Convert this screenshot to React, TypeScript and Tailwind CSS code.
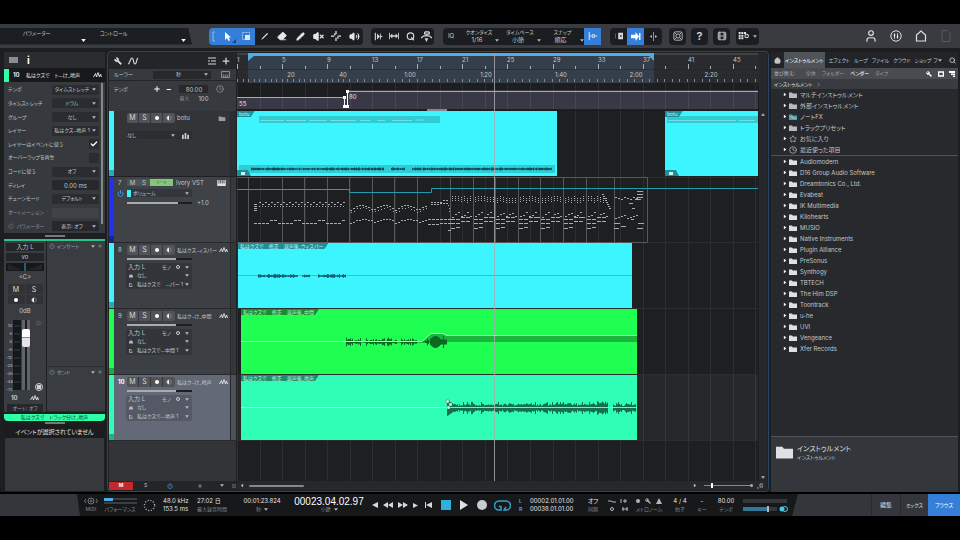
import React from "react";
import clsx from "clsx";
import {
  Check,
  Clock,
  Eraser,
  Film,
  House,
  ListMinus,
  Pencil,
  Plus,
  Power,
  Search,
  Star,
  User,
  Volume2,
  VolumeX,
  Wrench
} from "lucide-react";

interface Track {
  num: string;
  name: string;
  bar: string;
  selected?: boolean;
  output: string;
}

const audioTracks: Track[] = [
  { num: "8", name: "私はクズ..ィスパー", bar: "bg-[#3df5ff]", output: "私はクズで　...パー 1" },
  { num: "9", name: "私はク..け_中間", bar: "bg-[#1fff52]", output: "私はクズで...中間 1" },
  { num: "10", name: "私はク..け_地声", bar: "bg-[#2fffb6]", output: "私はクズで...地声 1", selected: true }
];

const inspectorRows = [
  { label: "テンポ", value: "タイムストレッチ" },
  { label: "タイムストレッチ", value: "ドラム" },
  { label: "グループ", value: "なし" },
  { label: "レイヤー", value: "私はクズ..地声 1" },
  { label: "レイヤーはイベントに従う", check: true },
  { label: "オーバーラップを再生", check: false },
  { label: "コードに従う", value: "オフ" },
  { label: "ディレイ", text: "0.00 ms" },
  { label: "チューンモード", value: "デフォルト" },
  { label: "オートメーション", text: "" }
];

const categories = ["マルチインストゥルメント", "外部インストゥルメント", "ノートFX", "トラックプリセット", "お気に入り", "最近使った項目"];

const vendors = [
  "Audiomodern", "D16 Group Audio Software", "Dreamtonics Co., Ltd.", "Evabeat", "IK Multimedia", "Kilohearts",
  "MUSIO", "Native Instruments", "Plugin Alliance", "PreSonus", "Synthogy", "TBTECH", "The Him DSP", "Toontrack",
  "u-he", "UVI", "Vengeance", "Xfer Records"
];

// deterministic noise so that the clips look the same on every render
function noise(n: number) {
  const v = Math.sin(n * 12.9898) * 43758.5453;
  return v - Math.floor(v);
}

function wavePath(x0: number, x1: number, mid: number, amp: (x: number) => number) {
  let d = "";
  for (let x = x0; x <= x1; x++) {
    const h = amp(x);
    if (h > 0) d += `M${x + 0.5} ${mid - h}V${mid + h}`;
  }
  return d;
}

function Down({ className }: { className?: string }) {
  return (
    <svg viewBox="0 0 6 4" className={clsx("h-[3px] w-[4px] shrink-0 fill-[#b4b6ba]", className)} aria-hidden="true">
      <path d="M0 0h6L3 4z" />
    </svg>
  );
}

function WaveIcon() {
  return (
    <svg viewBox="0 0 18 12" className="h-[6px] w-[9px] shrink-0 fill-none stroke-[#e4e5e8]" strokeWidth="1.8" aria-hidden="true">
      <path d="M1 10 5 3l2 7 3-9 3 9 2-6 2 6" />
    </svg>
  );
}

function FolderIcon({ className }: { className?: string }) {
  return (
    <svg viewBox="0 0 16 12" className={clsx("shrink-0", className)} aria-hidden="true">
      <path d="M0 1h6l1.500 2H16v9H0z" fill="currentColor" />
    </svg>
  );
}

interface DropProps {
  label: string;
  value: string;
  className?: string;
  center?: boolean;
}

function Drop({ label, value, className, center }: DropProps) {
  return (
    <span className={clsx("flex min-w-0 items-center pr-[3px]", className)}>
      <select
        aria-label={label}
        className={clsx("min-w-0 flex-1 appearance-none bg-transparent outline-none", center && "text-center")}
      >
        <option>{value}</option>
      </select>
      <Down />
    </span>
  );
}

function ToolButton({ label, active, className, children }: { label: string; active?: boolean; className?: string; children: React.ReactNode }) {
  return (
    <button
      type="button"
      aria-label={label}
      className={clsx("flex h-[17px] items-center justify-center", active ? "bg-[#367fd8]" : "bg-[#1c1d20]", className)}
    >
      {children}
    </button>
  );
}

function ToolSelect({ id, label, value, className }: { id: string; label: string; value: string; className: string }) {
  return (
    <div className={clsx("flex flex-col justify-center", className)}>
      <label htmlFor={id} className="leading-[8px]">{label}</label>
      <span className="flex h-[8px] items-center">
        <select id={id} className="min-w-0 flex-1 appearance-none bg-transparent text-center text-[6px] leading-[8px]">
          <option>{value}</option>
        </select>
        <Down />
      </span>
    </div>
  );
}

function TopBar() {
  return (
    <header className="flex h-6 shrink-0 items-center bg-[#393b40]">
      <div className="flex h-[17px] w-[192px] shrink-0 bg-[#1b1e23] [clip-path:polygon(0_0,98%_0,100%_100%,0_100%)]">
        <button type="button" className="flex w-[100px] items-center justify-between pr-[14px] pl-[23px]">
          <span className="pb-[5px]">パラメーター</span>
          <Down className="mt-2 w-[5px] fill-white" />
        </button>
        <button type="button" className="flex flex-1 items-center justify-between pr-[6px]">
          <span className="pb-[5px]">コントロール</span>
          <Down className="mt-2 w-[5px] fill-white" />
        </button>
      </div>

      <div className="ml-[17px] flex shrink-0 overflow-hidden rounded-sm text-[#e6e7ea]">
        <ToolButton label="矢印" active className="w-[28px]">
          <svg viewBox="0 0 28 17" className="h-[17px] w-[28px]">
            <path d="M6 4H4v9h2" fill="none" stroke="#8fbcf0" />
            <path d="M16 4v8l2-2 1.500 3 1.500-.8-1.500-2.700h2.500z" fill="#fff" />
            <path d="M27 11v4h-4z" fill="#16427c" />
          </svg>
        </ToolButton>
        <ToolButton label="範囲" active className="w-[18px]">
          <svg viewBox="0 0 18 17" className="h-[17px] w-[18px]" fill="none">
            <path d="M5.500 4.500h7v7h-7z" stroke="#9cc6f5" strokeDasharray="2 1" />
            <path d="M8 7h5v5H8z" fill="#dcebfb" />
          </svg>
        </ToolButton>
        <ToolButton label="分割" className="w-[18px]">
          <svg viewBox="0 0 10 10" className="size-[9px]"><path d="M1 9 3 6l5-5 1 1-5 5z" fill="currentColor" /></svg>
        </ToolButton>
        <ToolButton label="消しゴム" className="w-[18px]"><Eraser className="size-[10px] fill-current" /></ToolButton>
        <ToolButton label="ペイント" className="w-[18px]"><Pencil className="size-[9px] fill-current" /></ToolButton>
        <ToolButton label="ミュート" className="w-[18px]"><VolumeX className="size-[11px] fill-current stroke-3" /></ToolButton>
        <ToolButton label="ベンド" className="w-[18px]">
          <svg viewBox="0 0 12 12" className="size-[10px]" fill="none" stroke="currentColor" strokeWidth="1.500">
            <path d="M6 0v4M6 8v4M0 6h4M8 6h4M4 3l1 2M9 9 7.500 7.500" />
          </svg>
        </ToolButton>
        <ToolButton label="試聴" className="w-[18px]"><Volume2 className="size-[11px] fill-current" /></ToolButton>
      </div>

      <div className="ml-2 flex shrink-0 overflow-hidden rounded-sm text-[#d6d7da]">
        <ToolButton label="ナッジ" className="w-[15px]">
          <svg viewBox="0 0 12 12" className="size-[9px]" fill="currentColor"><path d="M1 1h1.500v10H1zM4 2l4 4-4 4zM8 2h1v3l3 1-3 1v3H8z" /></svg>
        </ToolButton>
        <ToolButton label="リップル" className="w-[16px]">
          <svg viewBox="0 0 12 12" className="size-[10px]" fill="currentColor"><path d="M0 2h1v8H0zM11 2h1v8h-1zM1 6l3-3v2h4V3l3 3-3 3V7H4v2z" /></svg>
        </ToolButton>
        <ToolButton label="クオンタイズ適用" className="w-[16px]">
          <svg viewBox="0 0 12 12" className="size-[9px]" fill="none" stroke="currentColor" strokeWidth="1.600"><circle cx="6" cy="5.500" r="4.300" /><path d="m7 7 3.500 4" /></svg>
        </ToolButton>
        <ToolButton label="自動スクロール" className="w-[16px]">
          <svg viewBox="0 0 12 12" className="size-[11px]" fill="none" stroke="currentColor" strokeWidth="1.400"><path d="M0 8c2-4 10-4 12 0M4 1h5M4 3.500h5M4 1v2.500M9 1v2.500" /><path d="M4 8h4l-2 4z" fill="currentColor" stroke="none" /></svg>
        </ToolButton>
      </div>

      <div className="ml-[9px] flex h-[17px] shrink-0 rounded-sm bg-[#1c1d20] text-center text-[#c9cbcf]">
        <button type="button" className="w-[16px] text-[6px]">IQ</button>
        <ToolSelect id="quantize" label="クオンタイズ" value="1/16" className="w-[40px]" />
        <ToolSelect id="timebase" label="タイムベース" value="小節" className="w-[42px]" />
        <ToolSelect id="snap" label="スナップ" value="順応" className="w-[43px]" />
        <ToolButton label="スナップ切替" active className="w-[17px]">
          <svg viewBox="0 0 12 12" className="size-[10px]" fill="none" stroke="#d8e8fb"><path d="M1.500 1v10M2 6h2M9 6h2M5 4.500h3v3H5z" strokeWidth="1.200" /></svg>
        </ToolButton>
      </div>

      <div className="ml-[9px] flex shrink-0 overflow-hidden rounded-sm">
        <ToolButton label="カーソル追従" className="w-[17px]">
          <svg viewBox="0 0 12 10" className="h-[8px] w-[10px]"><path d="M5 1h6v8H5z" fill="#d6d7da" /><path d="m9 3-2 2 2 2z" fill="#1c1d20" /><path d="M1 2h1v6H1z" fill="#66686c" /></svg>
        </ToolButton>
        <ToolButton label="スクロール" active className="w-[17px]">
          <svg viewBox="0 0 12 10" className="h-[9px] w-[11px]" fill="#fff"><path d="M1 3h5V0l4 5-4 5V7H1zM10 1h1.500v8H10z" /></svg>
        </ToolButton>
        <ToolButton label="カーソル編集" className="w-[18px]">
          <svg viewBox="0 0 12 12" className="size-[9px]" fill="#b4b6ba"><path d="M5.500 0h1v12h-1zM1 6l3-2v4zM11 6 8 4v4z" /></svg>
        </ToolButton>
      </div>
      <ToolButton label="マクロ" className="ml-[7px] w-[17px] rounded-sm">
        <svg viewBox="0 0 12 12" className="size-[10px]" fill="none" stroke="#d0d1d4"><rect x="1" y="1" width="10" height="10" rx="2" /><circle cx="6" cy="6" r="2.500" /><path d="m2 2 2 2M10 2 8 4M2 10l2-2M10 10 8 8" /></svg>
      </ToolButton>
      <ToolButton label="ヘルプ" className="ml-[5px] w-[17px] rounded-sm text-[11px] font-semibold text-[#d6d7da]">?</ToolButton>
      <ToolButton label="ビデオ" className="ml-[5px] w-[17px] rounded-sm"><Film className="size-[10px] text-[#c9cbcf]" /></ToolButton>
      <ToolButton label="表示設定" className="ml-[6px] w-[23px] gap-[3px] rounded-sm">
        <svg viewBox="0 0 16 12" className="h-[8px] w-[12px]" fill="#e1e2e5"><path d="M0 0h3v3H0zM4 0h3v3H4zM8 0h3v3H8zM0 4h3v3H0zM4 4h3v3H4zM0 8h3v3H0zM4 8h3v3H4z" /><circle cx="12" cy="6" r="2.600" fill="none" stroke="#e1e2e5" strokeWidth="1.600" /></svg>
        <Down />
      </ToolButton>

      <nav className="ml-auto flex shrink-0 items-center pr-[2px] text-[#dfe0e3]">
        <button type="button" aria-label="ユーザー" className="flex w-[25px] justify-center"><User className="size-[14px]" /></button>
        <button type="button" aria-label="オーディオ" className="flex w-[25px] justify-center">
          <svg viewBox="0 0 12 12" className="size-[12px]" fill="none" stroke="currentColor"><circle cx="6" cy="6" r="5.200" /><path d="M4.500 3.500v5M7.500 3.500v5M3.500 5h2M6.500 7h2" /></svg>
        </button>
        <button type="button" aria-label="スタート" className="flex w-[25px] justify-center">
          <svg viewBox="0 0 12 12" className="size-[12px]" fill="none" stroke="currentColor" strokeWidth="1.200"><path d="M1.500 11V5L6 1l4.500 4v6z" /></svg>
        </button>
        <button type="button" aria-label="ソング" className="flex w-[25px] justify-center text-[#55585e]">
          <svg viewBox="0 0 12 12" className="size-[12px]" fill="none" stroke="currentColor"><path d="M2 .5h5L10 3.500v8H2z" /></svg>
        </button>
      </nav>
    </header>
  );
}

function Inspector() {
  return (
    <aside className="flex w-[101px] shrink-0 flex-col bg-[#1c1e20]">
      <div className="flex h-4 items-center gap-[9px] bg-[#2a2c2f] px-[5px]">
        <svg viewBox="0 0 9 6" className="h-[6px] w-[9px] fill-[#8b8d92]"><path d="M0 0h9v6H0z" /></svg>
        <span className="text-[10px] leading-none font-bold text-white">i</span>
      </div>
      <div className="flex h-[14px] items-center bg-[#17191b] pr-[3px] text-[6px] text-[#e4e5e8]">
        <span className="h-[13px] w-[5px] bg-[#2fffa6]" />
        <span className="w-[17px] pl-1 font-bold">10</span>
        <span className="flex-1 whitespace-pre text-[5px]">私はクズで　ト...け_地声</span>
        <WaveIcon />
      </div>
      <div className="flex bg-[#36393d] pt-px">
        <div className="grid h-[150px] flex-1 auto-rows-fr">
          {inspectorRows.map((row) => (
            <label key={row.label} className="flex items-center justify-between pr-[2px] pl-[4px]">
              <span className={row.label === "オートメーション" ? "text-[#8d9095]" : ""}>{row.label}</span>
              {row.value && <Drop label={row.label} value={row.value} center className="h-[10px] w-[47px] shrink-0 rounded-xs bg-[#2a2c2f]" />}
              {row.text !== undefined && (
                <input
                  aria-label={row.label}
                  defaultValue={row.text}
                  className={clsx("h-[10px] w-[47px] shrink-0 rounded-xs text-center text-[6px]", row.text ? "bg-[#26282b]" : "bg-[#3f4246]")}
                />
              )}
              {row.check !== undefined && (
                <span className="relative flex size-[10px] shrink-0 items-center justify-center bg-[#2a2c2f]">
                  <input type="checkbox" defaultChecked={row.check} className="peer absolute inset-0 appearance-none" />
                  <Check className="hidden size-[8px] stroke-4 text-white peer-checked:block" />
                </span>
              )}
            </label>
          ))}
          <div className="flex items-center gap-[3px] pr-[2px] pl-[4px]">
            <Power className="size-[6px] shrink-0 text-[#85888d]" />
            <span className="flex-1 whitespace-nowrap text-[#8d9095]">パラメーター</span>
            <Drop label="パラメーター" value="表示: オフ" center className="h-[10px] w-[47px] shrink-0 rounded-xs bg-[#26282b]" />
          </div>
        </div>
        <span className="mr-[2px] h-[141px] w-[2px] bg-[#85888d]" />
      </div>
      <div className="flex h-[6px] items-center justify-center"><span className="h-[2px] w-5 bg-[#77797e]" /></div>
      <div className="h-[2px] bg-[#2bc389]" />

      <div className="flex h-[171px] bg-[#393c40]">
        <div className="flex w-[43px] flex-col items-center border-r border-[#1c1e20] pt-[2px]">
          <button type="button" className="h-[8px] w-[38px] bg-[#232528] text-[6px] leading-[8px]">入力 L</button>
          <button type="button" className="mt-[2px] h-[8px] w-[38px] bg-[#232528] text-[6px] leading-[8px]">vo</button>
          <svg viewBox="0 0 38 8" className="mt-[2px] h-[8px] w-[38px] bg-[#151719]" fill="none"><path d="M2 1 17 7H2zM36 1 21 7h15z" fill="#222427" /><path d="M19 0v8" stroke="#3fa5c4" /></svg>
          <span className="mt-[2px] text-[6px] leading-[8px]">&lt;C&gt;</span>
          <div className="mt-[3px] grid h-[20px] w-[35px] grid-cols-2 gap-px text-[7px] text-[#dadbde]">
            <button type="button" className="bg-[#303236]">M</button>
            <button type="button" className="bg-[#303236]">S</button>
            <button type="button" aria-label="録音" className="flex items-center justify-center bg-[#303236]"><span className="size-1 rounded-full bg-white" /></button>
            <button type="button" aria-label="モニター" className="flex items-center justify-center bg-[#303236]"><HalfDot /></button>
          </div>
          <span className="mt-[3px] text-[6px] leading-[8px]">0dB</span>
          <div className="flex h-[77px] w-full pt-[5px] pl-[2px]">
            <div className="flex w-[6px] flex-col justify-between text-right text-[4px] leading-[5px]">
              {["", "10", "6", "0", "-6", "-12", "-24", "-36", "-48", "-72"].map((db) => <span key={db}>{db}</span>)}
            </div>
            <svg viewBox="0 0 8 70" className="ml-px h-[70px] w-[8px] bg-[#15181b]" stroke="#28435a"><path d="M1 6h6M1 14h6M1 22h6M1 30h6M1 38h6M1 46h6M1 54h6M1 62h6" /></svg>
            <div className="flex w-[10px] justify-center">
              <input
                type="range"
                aria-label="チャンネル音量"
                defaultValue={82}
                className="h-[70px] w-[8px] appearance-none bg-[linear-gradient(90deg,#606367_0_3px,#1c1e20_3px_5px,#606367_5px)] [direction:rtl] [writing-mode:vertical-lr] [&::-webkit-slider-thumb]:h-[18px] [&::-webkit-slider-thumb]:w-[8px] [&::-webkit-slider-thumb]:appearance-none [&::-webkit-slider-thumb]:rounded-xs [&::-webkit-slider-thumb]:bg-[linear-gradient(#fff_0_8px,#8b8d92_8px_9px,#e4e5e8_9px)]"
              />
            </div>
            <div className="flex flex-1 flex-col items-center justify-between pb-[1px]">
              <ListMinus className="size-[6px] text-[#74777c]" />
              <span className="flex size-[8px] items-center justify-center rounded-full border border-[#d0d1d4]"><span className="size-[4px] bg-[#d0d1d4]" /></span>
            </div>
          </div>
          <div className="flex h-[12px] w-[36px] items-center justify-between px-1 text-[6px] font-bold"><span>10</span><WaveIcon /></div>
          <button type="button" className="h-[8px] w-[36px] bg-[#26282b] text-[5px] leading-[8px] text-[#9a9ca1]">オート: オフ</button>
        </div>
        <div className="flex flex-1 flex-col text-[#a2a5aa]">
          {["インサート", "センド"].map((name) => (
            <div key={name} className="flex h-[126px] items-start gap-[2px] border-b border-[#2b2d31] p-[2px] leading-[7px] last:h-auto last:flex-1">
              <Power className="size-[6px]" />
              <span className="flex-1">{name}</span>
              <Down className="mt-[2px]" />
              <Plus className="size-[6px]" />
            </div>
          ))}
        </div>
      </div>
      <div className="mt-[2px] h-[7px] rounded-b-sm bg-[#2fffa6] text-center text-[5px] leading-[7px] whitespace-pre text-[#0c4f35]">私はクズで　トラック分け_地声</div>
      <div className="flex h-[4px] items-center justify-center"><span className="h-[2px] w-5 bg-[#77797e]" /></div>
      <div className="h-[13px] bg-[#1a1c1e] text-center text-[6px] leading-[13px] text-[#e4e5e8]">イベントが選択されていません</div>
      <div className="mx-px mb-px flex-1 bg-[#36383c]" />
    </aside>
  );
}

function HalfDot() {
  return (
    <svg viewBox="0 0 8 8" className="size-[6px]" aria-hidden="true">
      <path d="M4 1a3 3 0 0 0 0 6z" fill="#fff" />
      <circle cx="4" cy="4" r="3" fill="none" stroke="#8b8d92" />
    </svg>
  );
}

function TrackButtons() {
  return (
    <div className="grid h-[10px] w-12 shrink-0 grid-cols-4 overflow-hidden rounded-xs text-[7px] leading-[10px] text-[#d6d7da]">
      <button type="button" className="border-r border-[#33363a] bg-[#505358]">M</button>
      <button type="button" className="border-r border-[#33363a] bg-[#505358]">S</button>
      <button type="button" aria-label="録音" className="flex items-center justify-center border-r border-[#33363a] bg-[#505358]"><span className="size-1 rounded-full bg-white" /></button>
      <button type="button" aria-label="モニター" className="flex items-center justify-center bg-[#505358]"><HalfDot /></button>
    </div>
  );
}

function VolumeSlider({ label, value }: { label: string; value: number }) {
  return (
    <input
      type="range"
      aria-label={label}
      defaultValue={value}
      className="block h-[2px] w-[65px] appearance-none [&::-webkit-slider-thumb]:h-[2px] [&::-webkit-slider-thumb]:w-px [&::-webkit-slider-thumb]:appearance-none"
      style={{ background: `linear-gradient(90deg, #a9abaf ${value}%, #1c1e20 ${value}%)` }}
    />
  );
}

function ColorBar({ className }: { className: string }) {
  return (
    <span className={clsx("flex w-[5px] shrink-0 items-end", className)}>
      <span className="h-[6px] w-full bg-black/30" />
    </span>
  );
}

function TrackHeader({ track }: { track: Track }) {
  return (
    <li className={clsx("flex h-[66px] border-b border-[#27292c]", track.selected ? "bg-[#636976]" : "bg-[#3c3f43]")}>
      <ColorBar className={track.bar} />
      <div className="min-w-0 flex-1 border-r border-[#27292c] pt-[2px]">
        <div className="flex h-[10px] items-center">
          <span className={clsx("w-[13px] shrink-0 pl-1 text-[6px]", track.selected && "font-bold text-white")}>{track.num}</span>
          <TrackButtons />
          <span className="ml-[2px] w-[42px] overflow-hidden leading-[8px] whitespace-nowrap">{track.name}</span>
          <WaveIcon />
        </div>
        <div className="mt-[3px] ml-[13px]"><VolumeSlider label={`${track.name} 音量`} value={76} /></div>
        <div className={clsx("mt-[3px] ml-[12px] grid h-[26px] w-[66px] auto-rows-fr rounded-xs", track.selected ? "bg-[#545965]" : "bg-[#323539]")}>
          <div className="flex items-center pl-[2px]">
            <span className="flex-1 text-[6px]">入力 L</span>
            <span className="w-[14px] text-[5px]">モノ</span>
            <span className="mr-[5px] size-[4px] rounded-full border border-[#d0d1d4]" />
            <Down className="mr-[3px]" />
          </div>
          <div className="flex items-center gap-[4px] pl-[3px]">
            <svg viewBox="0 0 8 6" className="h-[4px] w-[4px] fill-[#b4b6ba]"><path d="M2 0h4l2 3v3H0V3z" /></svg>
            <Drop label="インストゥルメント" value="なし" className="flex-1" />
          </div>
          <div className="flex items-center gap-[4px] pl-[3px]">
            <svg viewBox="0 0 8 8" className="size-[4px] fill-none stroke-[#b4b6ba]"><path d="M0 1h5M1 1v6h6M3 4h4" strokeWidth="1.500" /></svg>
            <Drop label="出力" value={track.output} className="flex-1" />
          </div>
        </div>
      </div>
      <span className={clsx("w-[5px]", track.selected ? "bg-[#4c525c]" : "bg-[#33363a]")} />
    </li>
  );
}

function TrackList() {
  return (
    <div className="flex w-[127px] shrink-0 flex-col bg-[#323438]">
      <div className="flex h-[16px] items-center gap-[5px] bg-[#232528] px-[5px] text-[#d6d7da]">
        <Wrench className="size-[8px] -scale-x-100 fill-current" />
        <svg viewBox="0 0 12 8" className="h-[8px] w-[12px] fill-none stroke-current"><path d="M1 7C3 7 3 1 5 1s1 6 3 6 1-5 3-6" strokeWidth="1.200" /></svg>
        <svg viewBox="0 0 8 8" className="ml-auto size-[8px] fill-none stroke-current"><path d="M0 1h8M0 4h2M3 4h5M0 7h8" strokeWidth="1.200" /></svg>
        <Plus className="size-[10px] stroke-3" />
      </div>
      <div className="flex h-[12px] items-center border-b border-[#232528] bg-[#36393d] pl-[5px]">
        <span className="w-[39px]">ルーラー</span>
        <Drop label="ルーラー" value="秒" center className="h-[8px] w-[58px] bg-[#26282b]" />
        <svg viewBox="0 0 10 8" className="ml-[10px] h-[7px] w-[9px] fill-none stroke-[#9a9ca1]"><path d="M.5.5h9v7h-9zM3 7V4M5 7V5M7 7V4" /></svg>
      </div>
      <div className="flex h-[30px] bg-[#36393d] pt-[4px] pl-[5px]">
        <span className="w-[39px] leading-[8px]">テンポ</span>
        <Plus className="size-[8px] stroke-3 text-white" />
        <span className="ml-[5px] text-[8px] leading-[8px] font-bold text-white">−</span>
        <div className="ml-[8px] w-[34px] text-center text-[6px]">
          <input aria-label="テンポ値" defaultValue="80.00" className="block h-[8px] w-[29px] bg-[#26282b] text-center" />
          <div className="mt-[3px] flex justify-between pr-[5px]"><span className="text-[5px] text-[#85888d]">最大</span><span>100</span></div>
        </div>
        <Clock className="ml-[3px] size-[8px] text-[#9a9ca1]" />
      </div>

      <ul className="flex-1">
        <li className="flex h-[66px] border-b border-[#1f2123] bg-[#323438]">
          <ColorBar className="bg-[#3df5ff]" />
          <div className="flex-1 border-r border-[#27292c] pt-[2px] pl-[13px]">
            <div className="flex h-[10px] items-center pr-[4px]">
              <TrackButtons />
              <span className="ml-[2px] flex-1 text-[6px]">botu</span>
              <FolderIcon className="h-[5px] w-[8px] text-[#9a9ca1]" />
            </div>
            <div className="mt-[8px] flex h-[8px] w-[65px] items-center bg-[#2c2e32]">
              <Drop label="グループ" value="なし" className="w-[51px]" />
              <svg viewBox="0 0 8 8" className="ml-[4px] size-[7px] fill-[#c9cbcf]"><path d="M0 3h2v5H0zM3 1h2v7H3zM6 3h2v5H6z" /></svg>
            </div>
          </div>
          <span className="w-[5px] bg-[#2c2e32]" />
        </li>
        <li className="flex h-[66px] border-b border-[#27292c] bg-[#3f4246]">
          <ColorBar className="bg-[#2230f0]" />
          <div className="flex-1 border-r border-[#27292c] pt-[2px]">
            <div className="flex h-[7px] items-center pr-[4px] text-[6px] leading-[7px]">
              <span className="w-[13px] pl-1">7</span>
              <button type="button" className="w-[11px] bg-[#505358]">M</button>
              <button type="button" className="w-[12px] bg-[#505358]">S</button>
              <button type="button" className="h-[7px] w-[23px] bg-[#86c67c] text-[4px] leading-[7px] text-[#2c5c27]">リード</button>
              <span className="ml-[3px] flex-1 whitespace-nowrap">Ivory VST</span>
              <svg viewBox="0 0 10 7" className="h-[6px] w-[9px]"><path d="M0 0h10v7H0z" fill="#dfe0e3" /><path d="M2 0v4M4 0v4M6 0v4M8 0v4" stroke="#3f4246" /></svg>
            </div>
            <div className="mt-[3px] flex h-[8px] items-center">
              <span className="flex w-[13px] justify-center"><Power className="size-[7px] stroke-3 text-[#4a9bf0]" /></span>
              <span className="h-[7px] w-[4px] bg-[#3df5ff]" />
              <Drop label="オートメーション" value="ボリューム" className="h-[8px] w-[61px] bg-[#33363a] pl-[2px]" />
            </div>
            <div className="mt-[2px] ml-[13px] flex h-[7px] items-center gap-[5px]">
              <VolumeSlider label="Ivory VST 音量" value={79} />
              <span className="text-[6px]">+1.0</span>
            </div>
          </div>
          <span className="w-[5px] bg-[#36393d]" />
        </li>
        {audioTracks.map((track) => <TrackHeader key={track.num} track={track} />)}
      </ul>

      <div className="flex h-[9px] items-center bg-[#232528] text-[5px]">
        <button type="button" className="h-[8px] w-[24px] bg-[#c3292b] font-bold text-white">M</button>
        <button type="button" className="w-[25px]">S</button>
        <span className="flex w-[24px] justify-center"><Power className="size-[6px] stroke-3 text-[#4a9bf0]" /></span>
        <span className="flex w-[36px] justify-center"><Plus className="size-[6px]" /></span>
        <Down className="mx-[2px]" />
        <svg viewBox="0 0 6 6" className="ml-[6px] size-[4px] stroke-[#77797e]"><path d="M0 1h6M0 3h6M0 5h6" /></svg>
      </div>
    </div>
  );
}

const BAR = 11.27;
const bars = Array.from({ length: 12 }, (_, i) => ({ n: 1 + i * 4, x: Math.round(i * 4 * BAR) }));
const seconds = [
  { t: "20", x: 54 }, { t: "40", x: 106 }, { t: "1:00", x: 173 }, { t: "1:20", x: 249 },
  { t: "1:40", x: 324 }, { t: "2:00", x: 399 }, { t: "2:20", x: 474 }
];

function Grid({ height }: { height: number }) {
  const lines = Array.from({ length: 24 }, (_, i) => `M${Math.round(i * BAR * 2)}.5 0V${height}`).join("");
  return <path d={lines} stroke="#ffffff" strokeOpacity="0.07" fill="none" />;
}

function Ruler() {
  let major = "";
  for (let i = 0; i < 24; i++) {
    const x = Math.round(i * BAR * 2);
    major += i % 2 ? `M${x}.5 13v3` : `M${x}.5 11v5`;
  }
  let minor = "";
  for (let x = 0.500; x < 521; x += x < 108 ? 5.600 : 7.510) minor += `M${Math.floor(x)}.5 26v3`;
  return (
    <div className="relative h-[30px] overflow-hidden bg-[#292b2e] text-[6px] leading-none text-[#c4c6ca]">
      <svg className="absolute inset-0 h-full w-[521px]" viewBox="0 0 521 30" fill="none">
        <path d="M0 0h521v2H0z" fill="#3c4347" />
        <path d="M11 0h406v30H11z" fill="#353f4b" />
        <path d="M11 0h406v8l-5-5H17l-6 5z" fill="#4dade6" />
        <path d={major} stroke="#a9abaf" />
        <path d={minor} stroke="#85888d" />
        <path d="M0 16.500h521" stroke="#1f2123" strokeOpacity="0.5" />
      </svg>
      {bars.map((b) => <span key={b.n} className="absolute top-[4px]" style={{ left: b.x }}>{b.n}</span>)}
      {seconds.map((s) => <span key={s.t} className="absolute top-[19px] -translate-x-1/2" style={{ left: s.x }}>{s.t}</span>)}
    </div>
  );
}

function TempoLane() {
  return (
    <div className="relative h-[28px] bg-[#1d1e20] leading-none text-[#e4e5e8]">
      <svg className="h-[28px] w-[521px]" viewBox="0 0 521 28" fill="none">
        <path d="M0 14h109V7h412v19H0z" fill="#383847" />
        <Grid height={26} />
        <path d="M0 14.500h107M110 8.500h411" stroke="#a9a9b2" />
        <path d="M107.500 14v10M110.500 8v16" stroke="#fff" />
        <path d="M106 13h3v3h-3zM109 7h3v3h-3zM106 22h3v3h-3zM109 22h3v3h-3z" fill="#fff" />
        <path d="M190 26h20v2h-20z" fill="#85888d" />
      </svg>
      <span className="absolute top-[18px] left-[2px] text-[6px]">55</span>
      <span className="absolute top-[11px] left-[112px] text-[6px]">80</span>
    </div>
  );
}

function Tag({ children, className }: { children: React.ReactNode; className: string }) {
  return (
    <span className={clsx("absolute top-0 left-0 h-[6px] pr-[5px] pl-[2px] text-[5px] leading-[6px] whitespace-pre [clip-path:polygon(0_0,100%_0,calc(100%_-_4px)_100%,0_100%)]", className)}>
      {children}
    </span>
  );
}

const voice = "私はクズで　修正　混声後_";
const phraseLines = [11, 45, 67, 90, 112, 135, 157, 180, 213, 236, 258, 281, 303, 326, 349, 377];

function pianoNotes() {
  let d = "";
  // repeated intro pattern, two voices
  for (let i = 0; i < 29; i++) {
    const x = 22 + i * 3;
    d += `M${x} ${i % 2 ? 27.5 : 25.5}h2M${x} 29.5h1`;
  }
  for (let i = 0; i < 4; i++) d += `M17 ${27.5 + i * 2}h3`;
  for (let i = 0; i < 23; i++) {
    const x = 17 + i * 4;
    d += `M${x} ${i % 6 > 3 ? 43.5 : 46.5}h3`;
  }
  // middle part, rising and falling figures
  for (let i = 0; i < 26; i++) {
    const x = 113 + i * 3;
    const y = Math.round(33 - 5 * Math.sin(((i % 7.500) / 7.500) * Math.PI)) + 0.5;
    d += `M${x} ${y}h2M${x + 1} ${y + 2 + Math.floor(noise(i) * 2)}h1M${x} ${Math.round(46 - 4 * Math.sin(((i % 7.500) / 9) * Math.PI)) + 0.5}h2`;
  }
  for (let i = 0; i < 6; i++) {
    d += `M${194 + i * 3} ${25.5 - (i > 3 ? 2 : 0)}h2M${194 + i * 3} ${27.5 - (i > 2 ? 1 : 0)}h2`;
    d += `M${191 + i * 4} 42.5h3M${191 + i * 4} ${i > 2 ? 46.5 : 47.5}h3`;
  }
  d += "M211 28.500h1M212 31.500h1M212 34.500h1M211 53.500h3";
  // dense chorus
  for (let p = 8; p < 15; p++) {
    const x0 = phraseLines[p];
    for (let i = 0; i < 7; i++) {
      const x = x0 + 2 + i * 3;
      for (let k = 0; k < 3; k++) d += `M${x} ${19.5 + k * 2 + Math.floor(noise(p * 9 + i) * 3)}h1`;
      d += `M${x} ${40.5 - (i % 3) * 2 - Math.floor(noise(i + p) * 2)}h2`;
    }
    for (let i = 0; i < 4; i++) {
      const x = x0 + 1 + i * 5;
      d += `M${x} ${42.5 - (i > 1 ? 2 : 0)}h4M${x} ${46.5 - (i > 1 ? 2 : 0)}h4`;
      if (i < 2) d += `M${x} ${51.5 - i}h4`;
    }
  }
  for (let i = 0; i < 8; i++) d += `M${365 + i} ${17.5 + i * 2}h2M${378 + i * 3} ${41.5 - (i % 4)}h2M${378 + i * 3} ${20.5 + (i % 3)}h2`;
  d += "M377 46.500h6M377 51.500h5M384 49.500h5M400 14.500h6M400 17.500h6M400 20.500h6M398 22.500h6M401 46.500h6M400 51.500h6M392 26.500h4M395 31.500h3M394 42.500h3";
  return d;
}

function Arrangement() {
  const folder = wavePath(14, 314, 58, (x) => (noise(Math.floor(x / 7) + 3) > 0.15 ? 0.5 + noise(x) : 0));
  const whisper = wavePath(20, 107, 33, (x) => (noise(Math.floor(x / 4) + 9) > 0.2 ? 0.5 + noise(x) * 1.500 : 0));
  const middle = wavePath(105, 205, 33, (x) => {
    if (x > 188 && x < 200) return 2 + 4 * Math.sin(((x - 188) / 12) * Math.PI);
    if (x >= 200) return x === 202 ? 6 : 2.500;
    return noise(Math.floor(x / 4) + 4) > 0.250 ? 1 + noise(x * 3) * noise(x) * 4 : 0.5;
  });
  const chest = wavePath(206, 394, 33, (x) => {
    if (x < 213) return 8 - (x - 206) * 0.7;
    if (x > 366 && x < 372) return 0;
    if (x > 355 && x < 367) return 4 + noise(x) * 3;
    if (noise(x * 7) > 0.900) return 6;
    return 1.500 + noise(Math.floor(x / 3)) * 2 + noise(x) * 2;
  });
  return (
    <div className="relative flex-1 overflow-hidden bg-[#1e1f21]">
      <svg className="absolute inset-0 h-full w-[521px]" viewBox="0 0 521 370" preserveAspectRatio="none" fill="none">
        <path d="M0 264h521v66H0z" fill="#26282a" />
        <Grid height={370} />
        <path d="M0 66.500h521M0 131.500h521M0 197.500h521M0 263.500h521M0 329.500h521" stroke="#2b2d30" />
      </svg>

      <section className="absolute top-0 left-0 h-[65px] w-[320px] bg-[#3df5ff]">
        <svg className="absolute inset-0 size-full" viewBox="0 0 320 65" fill="none">
          <path d="M22 5h181v7H22z" fill="#2ecdd6" />
          <path d="M23 9.500h24M49 9.500h20M72 9.500h18M93 9.500h26M123 9.500h10M140 9.500h8M155 9.500h20M178 9h9" stroke="#74dfe0" />
          <path d="M2 54h316v8H2z" fill="#2ecdd6" />
          <path d={folder} stroke="#0c4f60" />
          <path d="M0 59h11l3 6H0z" fill="#1d8f98" />
          <path d="M4 61h4v3H4z" fill="#c9f4f6" />
        </svg>
        <Tag className="bg-[#1d8f98] text-[#c9f4f6]">botu</Tag>
      </section>

      <section className="absolute top-0 left-[428px] h-[65px] w-[93px] bg-[#3df5ff]">
        <svg className="absolute inset-0 size-full" viewBox="0 0 93 65" fill="none">
          <path d="M2 5h91v7H2z" fill="#2ecdd6" />
          <path d="M3 9.500h68M74 9.500h16" stroke="#74dfe0" />
          <path d="M0 59h11l3 6H0z" fill="#1d8f98" />
          <path d="M4 61h4v3H4z" fill="#c9f4f6" />
        </svg>
        <Tag className="bg-[#1d8f98] text-[#c9f4f6]">botu</Tag>
      </section>

      <svg className="absolute top-[66px] left-0 h-[66px] w-[521px]" viewBox="0 0 521 66" fill="none">
        <path d="M0 .5h410.500v65H0" stroke="#55585c" />
        <path d={phraseLines.map((x) => `M${x}.5 1v64`).join("")} stroke="#55585c" />
        <path d={pianoNotes()} stroke="#a9abaf" />
        <path d="M0 12.500h112.500v3h82v-4H521" stroke="#2599b2" />
      </svg>

      <section className="absolute top-[132px] left-[1px] h-[65px] w-[394px] bg-[#3df5ff]">
        <svg className="absolute inset-0 size-full" viewBox="0 0 394 65" fill="none">
          <path d="M0 32.500h394" stroke="#2cc4cd" />
          <path d={whisper} stroke="#0f6072" />
        </svg>
        <Tag className="bg-[#1d8f98] text-[#c9f4f6]">{voice}ウィスパー</Tag>
      </section>

      <section className="absolute top-[198px] left-[4px] h-[65px] w-[396px] bg-[#1fff52]">
        <svg className="absolute inset-0 size-full" viewBox="0 0 396 65" fill="none">
          <path d="M181 33l9-8h12l4 2h190v6z" fill="#1bb53f" />
          <path d={middle} stroke="#0b6a22" />
          <path d="M0 32.500h181l9-8h12l4 2h190" stroke="#a6f7b5" />
        </svg>
        <Tag className="bg-[#148f30] text-[#b9f5c4]">{voice}中間</Tag>
      </section>

      <section className="absolute top-[264px] left-[4px] h-[65px] w-[396px] bg-[#2fffb6]">
        <svg className="absolute inset-0 size-full" viewBox="0 0 396 65" fill="none">
          <path d={chest} stroke="#14704f" />
          <path d="M0 32.500h396" stroke="#b2fbe0" strokeOpacity="0.8" />
          <path d="M205 25h3v3h-3zM208 28h3v3h-3zM206 31h3v3h-3z" fill="#d9fff0" stroke="#14805a" strokeWidth="0.500" />
        </svg>
        <Tag className="bg-[#1a9068] text-[#c0f5e1]">{voice}地声</Tag>
      </section>
    </div>
  );
}

function Timeline() {
  return (
    <div className="relative flex min-w-0 flex-1 flex-col pl-px">
      <div className="flex min-h-0 flex-1">
        <div className="relative flex min-w-0 flex-1 flex-col">
          <Ruler />
          <TempoLane />
          <Arrangement />
          <span className="absolute inset-y-0 left-[257px] w-px bg-[#a9abaf]/80" />
        </div>
        <div className="flex w-[8px] shrink-0 flex-col items-center justify-between bg-[#26282b] pt-[60px] pb-[2px]">
          <Down className="rotate-180" />
          <Down />
        </div>
      </div>
      <div className="flex h-[9px] items-center bg-[#26282b] pl-[3px]">
        <Down className="rotate-90" />
        <span className="ml-[5px] h-[2px] w-[55px] rounded-full bg-[#85888d]" />
        <Down className="ml-auto -rotate-90" />
        <input
          type="range"
          aria-label="横ズーム"
          defaultValue={16}
          className="ml-[7px] h-[5px] w-[46px] appearance-none bg-[linear-gradient(#85888d,#85888d)] bg-[length:100%_1px] bg-center bg-no-repeat [&::-webkit-slider-thumb]:h-[5px] [&::-webkit-slider-thumb]:w-[2px] [&::-webkit-slider-thumb]:appearance-none [&::-webkit-slider-thumb]:bg-white"
        />
        <span className="size-[3px] rounded-full bg-[#a9abaf]" />
        <svg viewBox="0 0 6 6" className="mx-[4px] size-[6px] fill-none stroke-[#9a9ca1]"><path d="M0 5h2M3 1h3v3H3z" /></svg>
      </div>
    </div>
  );
}

function CategoryIcon({ name }: { name: string }) {
  if (name === "お気に入り") return <Star className="size-[8px] text-[#c9cbcf]" />;
  if (name === "最近使った項目") return <Clock className="size-[8px] text-[#c9cbcf]" />;
  if (name === "ノートFX") {
    return (
      <svg viewBox="0 0 16 12" className="h-[6px] w-[8px]">
        <path d="M0 1h6l1.500 2H16v9H0z" fill="#4a9fc4" />
        <path d="M2 6h5v2h6v2" fill="none" stroke="#e3c04a" strokeWidth="2" />
      </svg>
    );
  }
  return <FolderIcon className="h-[6px] w-[8px] text-[#b9bbbf]" />;
}

function TreeRow({ name, icon }: { name: string; icon: React.ReactNode }) {
  return (
    <li>
      <button type="button" className="flex h-[11px] w-full items-center gap-[2px] pl-[12px] text-left">
        <Down className="-rotate-90 fill-white" />
        <span className="flex w-[8px]">{icon}</span>
        <span className="pl-px text-[6px]">{name}</span>
      </button>
    </li>
  );
}

function Browser() {
  return (
    <aside className="flex w-[187px] shrink-0 flex-col bg-[#27292c]">
      <nav className="flex h-4 items-center gap-[4px] bg-[#222427] pr-[2px] whitespace-nowrap">
        <House className="ml-[3px] size-[7px] shrink-0 fill-current" />
        <button type="button" className="-ml-px h-4 shrink-0 bg-[#505358] px-px text-white">インストゥルメント</button>
        <button type="button">エフェクト</button>
        <button type="button">ループ</button>
        <button type="button">ファイル</button>
        <button type="button">クラウド</button>
        <button type="button">ショップ</button>
        <button type="button" aria-label="その他" className="-ml-[2px] flex items-center">フ<Down /></button>
        <Search className="ml-auto size-[7px] shrink-0 stroke-3" />
      </nav>
      <div className="flex h-[11px] items-center gap-[6px] bg-[#484b50] px-[3px] text-[#9a9ca1]">
        <span className="mr-[5px] text-[#b9bbbf]">並び替え:</span>
        <button type="button">全体</button>
        <button type="button">フォルダー</button>
        <button type="button" className="text-white">ベンダー</button>
        <button type="button">タイプ</button>
        <Wrench className="ml-auto size-[6px] -scale-x-100 fill-current text-white" />
        <svg viewBox="0 0 6 6" className="size-[6px] fill-none stroke-white"><path d="M.5 1h5v4h-5z" strokeWidth="1.500" /></svg>
        <svg viewBox="0 0 6 6" className="-ml-px size-[6px] fill-white"><path d="M0 0h6v2H0zM2 2.500h4V4H2zM4 4.500h2V6H4z" /></svg>
      </div>
      <div className="flex h-[10px] items-center gap-[4px] bg-[#383b40] px-[3px] text-[#dfe0e3]">
        インストゥルメント
        <svg viewBox="0 0 4 6" className="h-[5px] w-[3px] fill-none stroke-[#3a9be6]"><path d="m.5.5 3 2.500-3 2.500" /></svg>
      </div>
      <ul className="border-b border-[#505358]">
        {categories.map((name) => <TreeRow key={name} name={name} icon={<CategoryIcon name={name} />} />)}
      </ul>
      <ul className="flex-1">
        {vendors.map((name) => <TreeRow key={name} name={name} icon={<FolderIcon className="h-[6px] w-[8px] text-[#dfe0e3]" />} />)}
      </ul>
      <div className="flex h-[56px] gap-[4px] border-t border-[#505358] bg-[#33363a] px-[5px] pt-[8px]">
        <FolderIcon className="h-[14px] w-[17px] text-[#dfe0e3]" />
        <div className="leading-[8px]">
          <p className="text-[7px] text-[#dfe0e3]">インストゥルメント</p>
          <p>インストゥルメント</p>
        </div>
      </div>
    </aside>
  );
}

function Stack({ top, bottom, className }: { top: React.ReactNode; bottom: React.ReactNode; className: string }) {
  return (
    <div className={clsx("flex shrink-0 flex-col items-center", className)}>
      <div className="flex h-[8px] items-center gap-[5px] text-[6px] whitespace-nowrap text-[#e4e5e8]">{top}</div>
      <div className="flex h-[8px] items-center gap-[3px] text-[5px] whitespace-nowrap text-[#85888d]">{bottom}</div>
    </div>
  );
}

function Transport() {
  return (
    <footer className="mt-[2px] flex h-[22px] shrink-0 justify-between bg-[#34363b]">
      <div className="ml-[77px] flex w-[721px] shrink-0 items-center bg-[#17181a] pl-[3px] [clip-path:polygon(0_0,100%_0,calc(100%_-_6px)_100%,3px_100%)]">
        <Stack
          className="w-[22px]"
          top={<svg viewBox="0 0 14 8" className="h-[8px] w-[14px] fill-none stroke-[#74777c]"><circle cx="7" cy="4" r="3" /><path d="M2 2 .5 4 2 6M12 2l1.500 2L12 6" /><circle cx="7" cy="4" r="1" /></svg>}
          bottom={<span>MIDI</span>}
        />
        <Stack
          className="w-[36px]"
          top={
            <svg viewBox="0 0 33 6" className="h-[6px] w-[33px]"><path d="M0 0h33v2H0zM0 4h33v2H0z" fill="#3a3d41" /><path d="M0 0h9v3H0z" fill="#4dade6" /></svg>
          }
          bottom={<span>パフォーマンス</span>}
        />
        <svg viewBox="0 0 14 14" className="ml-[5px] size-[13px] shrink-0 fill-none stroke-[#b4b6ba]"><circle cx="7" cy="7" r="5.500" strokeDasharray="1.200 1.700" strokeWidth="1.400" /></svg>
        <div className="ml-[7px] w-[34px] shrink-0 text-[6px] leading-[8px] text-[#dfe0e3]"><p>48.0 kHz</p><p>153.5 ms</p></div>
        <div className="w-[44px] shrink-0 leading-[8px]"><p className="text-[6px] text-[#dfe0e3]">27:02 日</p><p className="text-[#85888d]">最大録音時間</p></div>
        <Stack className="w-[42px]" top={<span>00:01:23.824</span>} bottom={<><span>秒</span><Down /></>} />
        <div className="ml-[11px] flex w-[70px] shrink-0 flex-col items-center">
          <span className="font-['Liberation_Sans'] text-[10px] leading-[9px] text-white">00023.04.02.97</span>
          <span className="flex h-[7px] items-center gap-[3px] text-[#85888d]">小節<Down /></span>
        </div>

        <div className="ml-[5px] flex shrink-0 items-center text-[#d6d7da]">
          <button type="button" aria-label="戻る" className="flex w-[12px] justify-center"><svg viewBox="0 0 6 6" className="size-[6px] fill-current"><path d="M6 0v6L0 3z" /></svg></button>
          <button type="button" aria-label="早戻し" className="flex w-[14px] justify-center"><svg viewBox="0 0 10 6" className="h-[6px] w-[10px] fill-current"><path d="M5 0v6L0 3zM10 0v6L5 3z" /></svg></button>
          <button type="button" aria-label="早送り" className="flex w-[15px] justify-center"><svg viewBox="0 0 10 6" className="h-[6px] w-[10px] fill-current"><path d="M0 0v6l5-3zM5 0v6l5-3z" /></svg></button>
          <button type="button" aria-label="進む" className="flex w-[11px] justify-center"><svg viewBox="0 0 6 6" className="size-[5px] fill-current"><path d="M0 0v6l6-3z" /></svg></button>
          <button type="button" aria-label="先頭へ" className="flex w-[15px] justify-center"><svg viewBox="0 0 7 6" className="h-[6px] w-[7px] fill-current"><path d="M0 0h1v6H0zM7 0v6L1 3z" /></svg></button>
          <button type="button" aria-label="停止" className="ml-[5px] size-[10px] bg-[#2fb0dc]" />
          <button type="button" aria-label="再生" className="flex w-[26px] justify-center"><svg viewBox="0 0 8 10" className="h-[10px] w-[8px] fill-[#dfe0e3]"><path d="M0 0v10l8-5z" /></svg></button>
          <button type="button" aria-label="録音" className="size-[10px] rounded-full bg-[#c9cbcf]" />
          <button type="button" aria-label="ループ" className="ml-[7px]">
            <svg viewBox="0 0 17 12" className="h-[12px] w-[17px] fill-none stroke-[#2fa3cf]" strokeWidth="1.500"><path d="M7 7v4H5a4.500 4.500 0 1 1 0-9h7a4.500 4.500 0 0 1 0 9h-2l2-3M7 8 5 7" /></svg>
          </button>
        </div>
        <div className="ml-[8px] w-[11px] shrink-0 text-[5px] leading-[8px] font-bold text-[#4a9bf0]"><p>L</p><p>R</p></div>
        <div className="w-[51px] shrink-0 text-[6px] leading-[8px] whitespace-nowrap text-[#e4e5e8]"><p>00002.01.01.00</p><p>00038.01.01.00</p></div>
        <Stack className="w-[24px]" top={<span>オフ</span>} bottom={<span>同期</span>} />
        <svg viewBox="0 0 22 14" className="ml-[3px] h-[14px] w-[22px] shrink-0 fill-none stroke-[#b4b6ba]">
          <path d="M0 3h3l2 1h3M13 1v4M15 3h4M17 1v4M14 11h6M15 9v4M19 9v4" />
          <circle cx="4" cy="11" r="1.500" />
        </svg>
        <Stack
          className="w-[38px]"
          top={
            <>
              <span className="size-[4px] rounded-full bg-[#b4b6ba]" />
              <Wrench className="size-[6px] -scale-x-100 fill-current text-[#b4b6ba]" />
              <svg viewBox="0 0 6 6" className="size-[6px] fill-[#b4b6ba]"><path d="M3 0 6 6H0z" /></svg>
            </>
          }
          bottom={<span>メトロノーム</span>}
        />
        <Stack className="w-[24px]" top={<span>4 / 4</span>} bottom={<span>拍子</span>} />
        <Stack className="w-[20px]" top={<span>-</span>} bottom={<span>キー</span>} />
        <Stack className="w-[28px]" top={<span>80.00</span>} bottom={<span>テンポ</span>} />
        <svg viewBox="0 0 48 16" className="ml-[3px] h-[16px] w-[48px] shrink-0">
          <path d="M0 2h44v4H0zM0 10h34v4H0z" fill="#33363a" />
          <path d="M0 10h25v4H0z" fill="#2f7898" />
          <path d="M24 9h2v6h-2z" fill="#b4b6ba" />
          <circle cx="39" cy="12" r="2.500" fill="#4dc3f0" />
          <circle cx="42" cy="12" r="2.500" fill="none" stroke="#4dc3f0" />
        </svg>
      </div>
      <div className="flex text-[6px] text-[#dfe0e3]">
        <button type="button" className="w-[29px] border-l border-[#27292c]">編集</button>
        <button type="button" className="w-[28px] border-l border-[#27292c] text-[5px]">ミックス</button>
        <button type="button" className="w-[32px] bg-[#367fd8] text-[5px] text-white">ブラウズ</button>
      </div>
    </footer>
  );
}

export default function App() {
  return (
    <div className="flex h-screen min-h-[540px] flex-col overflow-hidden bg-black py-6 font-['Inter','Noto_Sans_CJK_JP',sans-serif] text-[5px] leading-none text-[#c4c6ca] [font-feature-settings:'palt']">
      <TopBar />
      <main className="flex min-h-0 flex-1 gap-[2px] bg-[#1c1e20] px-[2px] pt-[4px]">
        <div className="flex w-[103px] shrink-0 pl-[2px]"><Inspector /></div>
        <div className="-mt-px flex min-w-0 flex-1 rounded-sm border border-[#2b4566] bg-[#1f2123] p-px">
          <TrackList />
          <Timeline />
        </div>
        <Browser />
      </main>
      <Transport />
    </div>
  );
}
